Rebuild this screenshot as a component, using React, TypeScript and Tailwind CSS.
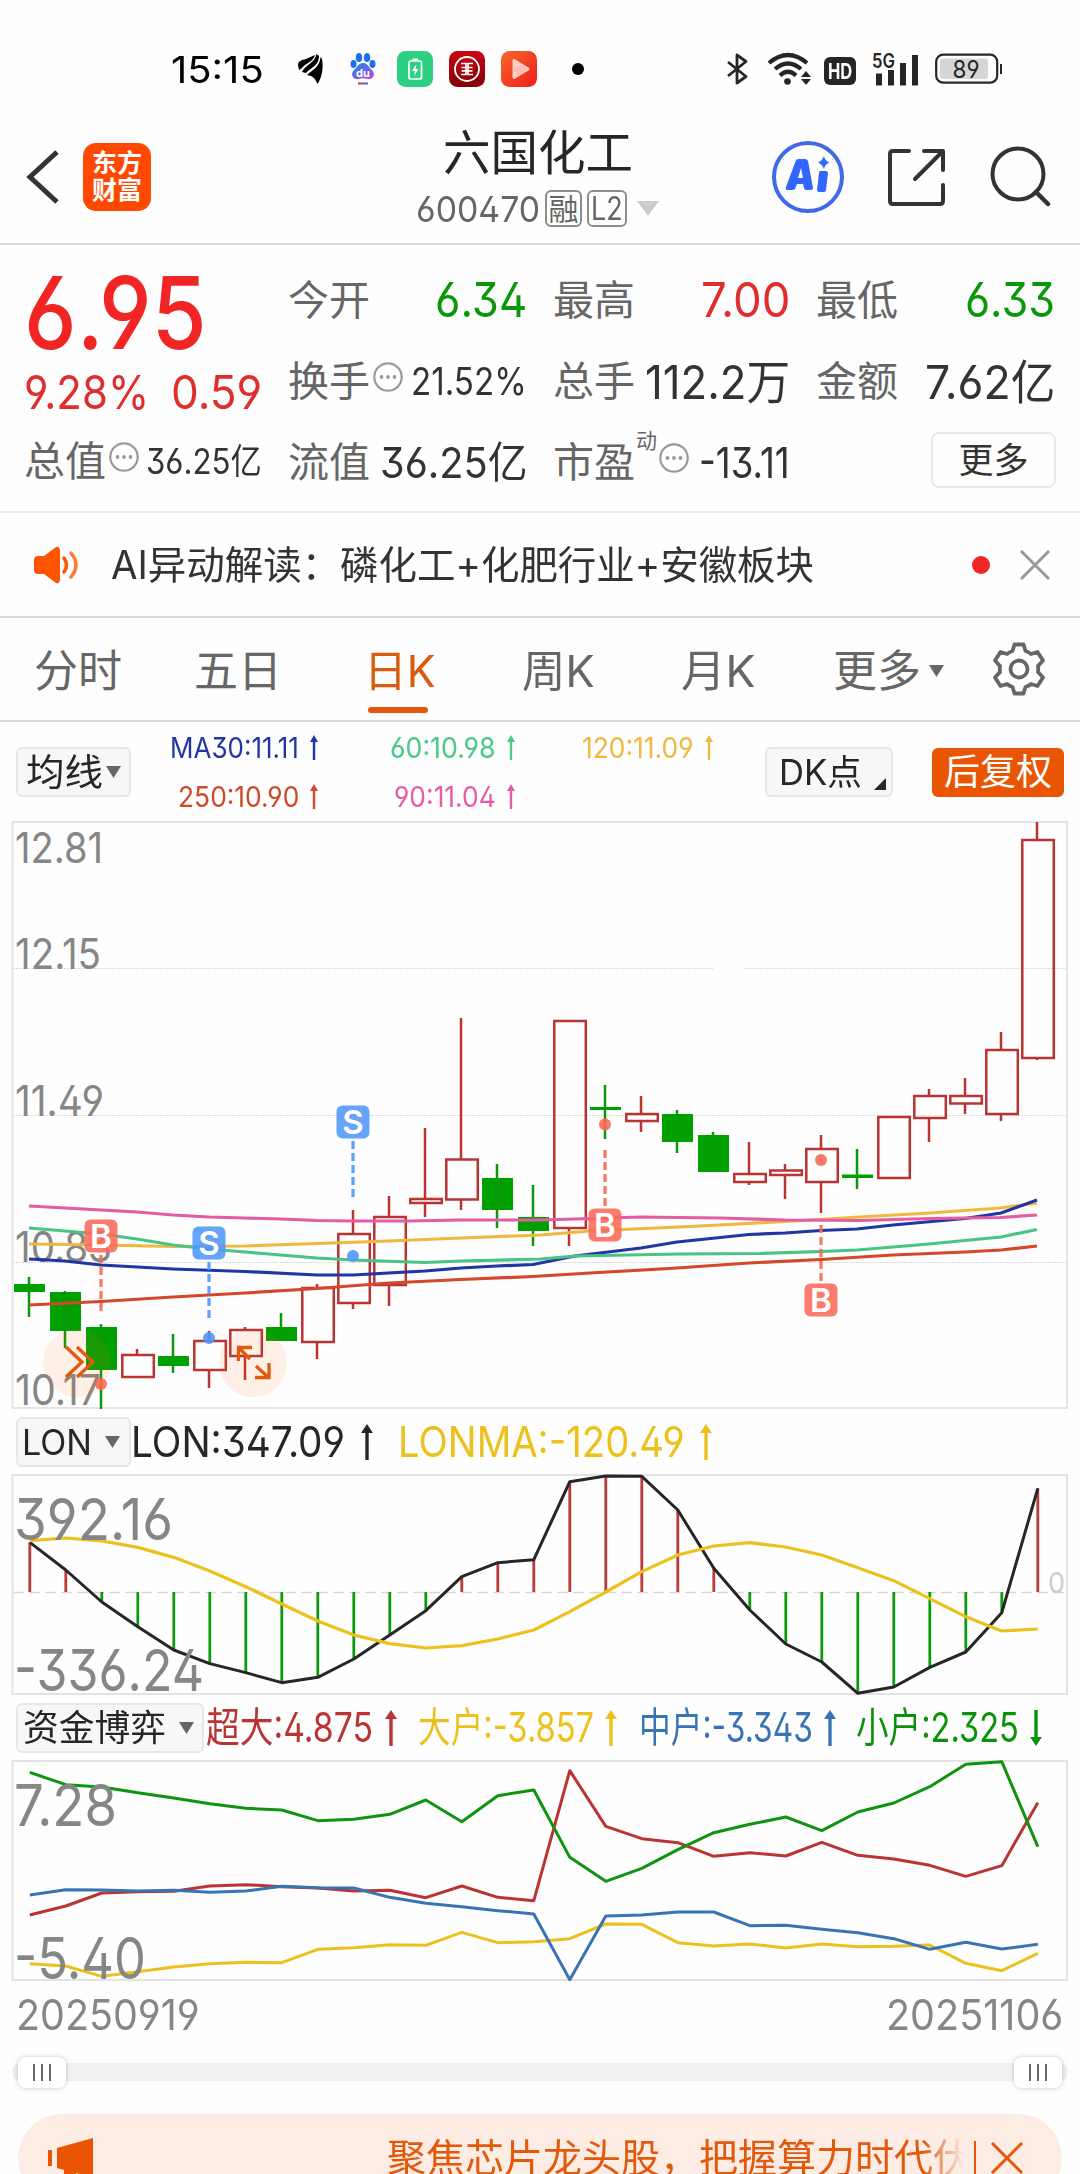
import { useLayoutEffect, useRef, useState, type ReactNode } from "react";

const RED = "#b93433";
const BLUE = "#3a73b4";
const GOLD = "#ecc11d";

/** Single line of text stretched horizontally to an exact width. */
function Fit({ w, className = "", children }: { w: number; className?: string; children: ReactNode }) {
  const ref = useRef<HTMLSpanElement>(null);
  const [scale, setScale] = useState(1);
  useLayoutEffect(() => {
    if (ref.current && ref.current.offsetWidth) setScale(w / ref.current.offsetWidth);
  }, [w]);
  return (
    <span className={`flex shrink-0 items-center ${className}`} style={{ width: w }}>
      <span ref={ref} className="shrink-0 origin-left whitespace-nowrap leading-none" style={{ transform: `scaleX(${scale})` }}>
        {children}
      </span>
    </span>
  );
}

function Arrow({ down = false, h = 36, className = "" }: { down?: boolean; h?: number; className?: string }) {
  return (
    <svg width="14" height={h} viewBox={`0 0 14 ${h}`} className={`shrink-0 ${down ? "rotate-180" : ""} ${className}`}>
      <path d={`M7 5V${h}`} stroke="currentColor" strokeWidth={h > 30 ? 3.4 : 2.4} />
      <path d={h > 30 ? "M7 0L13 9H1Z" : "M7 0L11 7H3Z"} fill="currentColor" />
    </svg>
  );
}

function Caret({ className = "" }: { className?: string }) {
  return (
    <svg width="15" height="12" viewBox="0 0 15 12" className={`shrink-0 ${className}`}>
      <path d="M0 0H15L7.5 12Z" fill="currentColor" />
    </svg>
  );
}

function Dots() {
  return (
    <svg width="30" height="30" viewBox="0 0 30 30" className="mb-2 shrink-0 text-[#999]">
      <circle cx="15" cy="15" r="13.7" fill="none" stroke="currentColor" strokeWidth="2.2" />
      <circle cx="8.5" cy="15" r="1.9" fill="currentColor" />
      <circle cx="15" cy="15" r="1.9" fill="currentColor" />
      <circle cx="21.5" cy="15" r="1.9" fill="currentColor" />
    </svg>
  );
}

function StatusBar() {
  return (
    <div className="flex h-[100px] shrink-0 items-center pl-[171px] pt-[38px] text-black">
      <Fit w={93} className="text-[37px]">15:15</Fit>
      <svg width="28" height="32" viewBox="0 0 28 32" className="ml-[33px]">
        <path d="M1 12C1 8 5 7 9 6L18 2C17 8 9 10 5 15L2 17Z" />
        <path d="M5 19C8 12 18 10 19.500 1L22 3C22 13 13 15 9 20Z" />
        <path d="M10 22C15 17 23 14 23.500 4L25 6C27 17 24 26 20.500 31C18 25 16 23 10 22Z" />
      </svg>
      <svg width="26" height="34" viewBox="0 0 26 34" className="ml-[25px]">
        <defs>
          <linearGradient id="paw" x1="0" y1="0" x2="1" y2="1">
            <stop offset="0" stopColor="#1687f8" />
            <stop offset="1" stopColor="#b04ad8" />
          </linearGradient>
        </defs>
        <g fill="#1d6ff0">
          <ellipse cx="3.5" cy="12" rx="3" ry="4" />
          <ellipse cx="9" cy="5.5" rx="3.2" ry="4.5" />
          <ellipse cx="17" cy="5.5" rx="3.2" ry="4.5" />
          <ellipse cx="22.5" cy="12" rx="3" ry="4" />
        </g>
        <path d="M13 11C18 11 19 16 22 18C26 22 23 28 18 27C15 26 11 26 8 27C3 28 0 22 4 18C7 16 8 11 13 11Z" fill="url(#paw)" />
        <text x="13" y="25" fontSize="11" fontWeight="700" fill="#fff" textAnchor="middle">du</text>
        <path d="M8 31.5H13" stroke="#d63a3a" strokeWidth="2" />
        <path d="M13 31.5H18" stroke="#3a6bd6" strokeWidth="2" />
      </svg>
      <svg width="36" height="36" viewBox="0 0 36 36" className="ml-[21px]">
        <rect width="36" height="36" rx="8.5" fill="#2dcf81" />
        <rect x="12" y="10" width="12.500" height="18" rx="2" fill="none" stroke="#fff" strokeWidth="1.700" />
        <path d="M15.500 8.500H21" stroke="#fff" strokeWidth="2" />
        <path d="M19.500 13L15 20H18L17 25L21.500 18H18.500Z" fill="#fff" />
      </svg>
      <svg width="36" height="36" viewBox="0 0 36 36" className="ml-4">
        <defs>
          <linearGradient id="bank" x1="0" y1="0" x2="0" y2="1">
            <stop offset="0" stopColor="#cc0412" />
            <stop offset="1" stopColor="#820008" />
          </linearGradient>
        </defs>
        <rect width="36" height="36" rx="8.500" fill="url(#bank)" />
        <circle cx="18" cy="18" r="12" fill="none" stroke="#fff" strokeWidth="1.800" />
        <path d="M12 12.500H17V23.500H12M24 12.500H19V23.500H24M12.500 16.500H23.500M12.500 19.800H23.500" fill="none" stroke="#fff" strokeWidth="1.700" />
      </svg>
      <svg width="36" height="36" viewBox="0 0 36 36" className="ml-4">
        <defs>
          <linearGradient id="play" x1="0" y1="0" x2="1" y2="1">
            <stop offset="0" stopColor="#f7692c" />
            <stop offset="1" stopColor="#ee1c1c" />
          </linearGradient>
        </defs>
        <rect width="36" height="36" rx="8.500" fill="url(#play)" />
        <path d="M13 9.500L27 18L13 26.500Z" fill="#ffd0c5" stroke="#ffd0c5" strokeWidth="3" strokeLinejoin="round" />
        <path d="M12 18L20 14L27 18L18 25Z" fill="#ffb5a5" opacity=".7" />
      </svg>
      <span className="ml-[35px] size-3 rounded-full bg-black" />
      <svg width="24" height="34" viewBox="0 0 24 34" className="ml-[142px]">
        <path d="M2 10L20 24.500L11 31V3L20 9.500L2 24" fill="none" stroke="#262626" strokeWidth="2.800" strokeLinejoin="round" />
      </svg>
      <svg width="46" height="34" viewBox="0 0 46 34" className="ml-[17px]">
        <g fill="none" stroke="#262626" strokeWidth="4.200">
          <path d="M2 11Q21 -5 40 11" />
          <path d="M8 17Q21 6 34 17" />
          <path d="M13 23.500Q21 16 29 23.500" />
        </g>
        <circle cx="20.500" cy="29.500" r="3.300" fill="#262626" />
        <path d="M39 19L44 25H34ZM39 33L44 27H34Z" fill="#262626" />
      </svg>
      <span className="ml-[11px] mt-1 flex h-7 w-8 items-center justify-center rounded-md bg-[#262626] text-white">
        <Fit w={24} className="text-[22px] font-bold">HD</Fit>
      </span>
      <svg width="48" height="36" viewBox="0 -2 48 36" className="ml-4 overflow-visible text-[#262626]">
        <text x="0" y="14.500" fontSize="20" fontWeight="600" textLength="23" lengthAdjust="spacingAndGlyphs" fill="currentColor">5G</text>
        <path d="M7 20.500V32.500M19 17V32.500M31 10V32.500M43 2V32.500" stroke="currentColor" strokeWidth="6" />
      </svg>
      <svg width="68" height="32" viewBox="0 0 68 32" className="ml-[15px]">
        <rect x="1.200" y="1.700" width="61" height="28" rx="7" fill="none" stroke="#262626" strokeWidth="2.200" />
        <rect x="5" y="5.500" width="48" height="20.500" rx="3" fill="#d6d6d6" />
        <path d="M66 11V21" stroke="#262626" strokeWidth="2" />
        <text x="17.500" y="24.500" fontSize="24" textLength="27" lengthAdjust="spacingAndGlyphs" fill="#262626">89</text>
      </svg>
    </div>
  );
}

function Header() {
  return (
    <div className="flex h-[145px] shrink-0 items-center border-b-2 border-[#dadada] pl-[26px] pt-[11px] text-[#333]">
      <svg width="34" height="54" viewBox="0 0 34 54">
        <path d="M31 2L4 27L31 52" fill="none" stroke="#333" strokeWidth="5" />
      </svg>
      <div className="ml-[23px] flex size-[68px] flex-col items-center justify-center rounded-[13px] bg-[#ff4902] text-[25px] font-bold leading-[27px] text-white">
        <span>东方</span>
        <span>财富</span>
      </div>
      <div className="ml-[265px] flex w-[243px] flex-col items-center">
        <Fit w={190} className="mb-[13px] h-[50px] text-[48px] text-[#262626]">六国化工</Fit>
        <div className="flex h-9 items-center text-[#666]">
          <Fit w={124} className="text-[36px]">600470</Fit>
          <span className="ml-[5px] flex h-[37px] w-[37px] items-center justify-center rounded-md border-2 border-[#8c8c8c] text-[30px] leading-none">融</span>
          <span className="ml-[5px] flex h-[37px] w-10 items-center justify-center rounded-md border-2 border-[#8c8c8c]">
            <Fit w={32} className="text-[32px]">L2</Fit>
          </span>
          <svg width="22" height="15" viewBox="0 0 22 15" className="ml-[10px]">
            <path d="M0 0H22L11 15Z" fill="#ccc" />
          </svg>
        </div>
      </div>
      <svg width="74" height="74" viewBox="0 0 74 74" className="ml-[112px]">
        <circle cx="37" cy="37" r="34" fill="none" stroke="#4169ea" strokeWidth="4" />
        <path
          fillRule="evenodd"
          d="M25 20Q26 19 28 19H34Q36 19 37 21L42 48Q42 50 40 50H35Q34 50 33 48L32 44H26L24 49Q23 50 21 50H16Q14 50 15 47ZM30 28L27 38H32Z"
          fill="#3366ff"
        />
        <path d="M49 31H55Q57 31 57 33L55 50Q55 52 53 52H48Q46 52 46 50L48 33Q48 31 49 31Z" fill="#3366ff" />
        <path d="M53 16Q54 21 58.500 22.500Q54 24 53 29Q51 24 47 22.500Q51 21 53 16Z" fill="#3366ff" />
      </svg>
      <svg width="60" height="60" viewBox="0 0 60 60" className="ml-[41px]">
        <g fill="none" stroke="#333" strokeWidth="4" strokeLinecap="round" strokeLinejoin="round">
          <path d="M23 4H7Q4 4 4 7V54Q4 57 7 57H54Q57 57 57 54V38" />
          <path d="M38 4H57V23" />
          <path d="M56 5L29 32" />
        </g>
      </svg>
      <svg width="62" height="62" viewBox="0 0 62 62" className="ml-[43px]">
        <circle cx="29" cy="28" r="25.500" fill="none" stroke="#333" strokeWidth="4" />
        <path d="M47 46L59 58" stroke="#333" strokeWidth="4.500" strokeLinecap="round" />
      </svg>
    </div>
  );
}

function Stat({ label, children }: { label: string; children?: ReactNode }) {
  return (
    <div className="flex h-[60px] items-center">
      <Fit w={82} className="text-[41px] text-[#666]">{label}</Fit>
      {children}
    </div>
  );
}

function Quote() {
  return (
    <div className="flex h-[268px] shrink-0 gap-x-[26px] border-b-2 border-[#ececec] pl-[24px] text-[#333]">
      <div className="flex w-[238px] flex-col pt-[9px]">
        <Fit w={183} className="h-[116px] text-[101px] font-medium text-[#f22525]">6.95</Fit>
        <div className="flex h-[42px] justify-between text-[#de2e2e]">
          <Fit w={125} className="text-[47px]">9.28%</Fit>
          <Fit w={91} className="text-[47px]">0.59</Fit>
        </div>
        <div className="mt-[19px]">
          <Stat label="总值">
            <span className="ml-[3px]"><Dots /></span>
            <Fit w={116} className="ml-auto text-[35px]">36.25亿</Fit>
          </Stat>
        </div>
      </div>
      <div className="flex w-[239px] flex-col gap-[21px] pt-[25px]">
        <Stat label="今开"><Fit w={92} className="ml-auto text-[48px] text-[#0a980a]">6.34</Fit></Stat>
        <Stat label="换手">
          <span className="ml-[3px]"><Dots /></span>
          <Fit w={116} className="ml-auto text-[38px]">21.52%</Fit>
        </Stat>
        <Stat label="流值"><Fit w={147} className="ml-auto text-[43px]">36.25亿</Fit></Stat>
      </div>
      <div className="flex w-[237px] flex-col gap-[21px] pt-[25px]">
        <Stat label="最高"><Fit w={89} className="ml-auto text-[48px] text-[#de2e2e]">7.00</Fit></Stat>
        <Stat label="总手"><Fit w={145} className="ml-auto text-[47px]">112.2万</Fit></Stat>
        <Stat label="市盈">
          <span className="mb-11 ml-px w-[23px] text-[21px] leading-none text-[#666]">动</span>
          <Dots />
          <Fit w={91} className="ml-auto text-[43px]">-13.11</Fit>
        </Stat>
      </div>
      <div className="flex w-[239px] flex-col gap-[21px] pt-[25px]">
        <Stat label="最低"><Fit w={90} className="ml-auto text-[48px] text-[#0a980a]">6.33</Fit></Stat>
        <Stat label="金额"><Fit w={130} className="ml-auto text-[47px]">7.62亿</Fit></Stat>
        <div className="-mr-px flex h-14 w-[125px] items-center justify-center self-end rounded-lg border-2 border-[#e8e8e8] text-[35px]">更多</div>
      </div>
    </div>
  );
}

function News() {
  return (
    <div className="flex h-[105px] shrink-0 items-center border-b-2 border-[#dadada] pl-[33px] text-[#333]">
      <svg width="46" height="38" viewBox="0 0 46 38">
        <path d="M5 10H11L23 1Q26 0 27 4V34Q26 38 23 37L11 28H5Q1 28 1 24V14Q1 10 5 10Z" fill="#ff5500" />
        <path d="M31 12Q36 19 31 26" fill="none" stroke="#ff5500" strokeWidth="3.500" strokeLinecap="round" />
        <path d="M38 7Q48 19 38 31" fill="none" stroke="#ff7b38" strokeWidth="3.500" strokeLinecap="round" />
      </svg>
      <Fit w={703} className="ml-[32px] text-[39px]">AI异动解读：磷化工+化肥行业+安徽板块</Fit>
      <span className="ml-[158px] size-[18px] rounded-full bg-[#f22525]" />
      <svg width="30" height="30" viewBox="0 0 30 30" className="ml-[30px]">
        <path d="M1 1L29 29M29 1L1 29" stroke="#999" strokeWidth="3" />
      </svg>
    </div>
  );
}

function Tabs() {
  return (
    <div className="flex h-[104px] shrink-0 items-center border-b-2 border-[#dadada] pl-[34px] pt-1 text-[44px] text-[#666]">
      <Fit w={88}>分时</Fit>
      <Fit w={88} className="ml-[72px]">五日</Fit>
      <div className="relative ml-[82px] text-[#dc5a0e]">
        <Fit w={72}>日K</Fit>
        <span className="absolute left-1 top-[58px] h-[6px] w-[60px] rounded-full bg-[#e2590c]" />
      </div>
      <Fit w={73} className="ml-[86px]">周K</Fit>
      <Fit w={75} className="ml-[86px]">月K</Fit>
      <Fit w={88} className="ml-[77px]">更多</Fit>
      <Caret className="ml-[8px]" />
      <svg width="54" height="54" viewBox="0 0 54 54" className="mb-1 ml-[48px]">
        <path
          d="M22.500 2.500H31.500L33.500 9Q36.500 10 39 12L45.500 10L51 18.500L46 24Q46.500 27 46 30L51 35.500L45.500 44L39 42Q36.500 44 33.500 45L31.500 51.500H22.500L20.500 45Q17.500 44 15 42L8.500 44L3 35.500L8 30Q7.500 27 8 24L3 18.500L8.500 10L15 12Q17.500 10 20.500 9Z"
          fill="none"
          stroke="#666"
          strokeWidth="3.800"
          strokeLinejoin="round"
        />
        <circle cx="27" cy="27" r="8.500" fill="none" stroke="#666" strokeWidth="3.800" />
      </svg>
    </div>
  );
}

function MaLegend({ w, color, children }: { w: number; color: string; children: string }) {
  return (
    <div className={`flex h-7 items-center justify-end ${color}`}>
      <Fit w={w} className="text-[29px]">{children}</Fit>
      <Arrow h={25} className="ml-2" />
    </div>
  );
}

function MaBar() {
  return (
    <div className="flex h-[98px] shrink-0 items-center pl-4 pt-[2px] text-[#262626]">
      <div className="flex h-[50px] w-[115px] items-center rounded-md border-2 border-[#e6e7e9] bg-[#f6f7f9] pl-2">
        <Fit w={77} className="text-[37px]">均线</Fit>
        <Caret className="ml-[3px] text-[#666]" />
      </div>
      <div className="ml-[38px] grid w-[548px] grid-cols-[152px_197px_198px] gap-y-[21px]">
        <MaLegend w={129} color="text-[#2036a4]">MA30:11.11</MaLegend>
        <MaLegend w={106} color="text-[#48c986]">60:10.98</MaLegend>
        <MaLegend w={112} color="text-[#efb840]">120:11.09</MaLegend>
        <MaLegend w={121} color="text-[#cf4a2b]">250:10.90</MaLegend>
        <MaLegend w={102} color="text-[#e85ba6]">90:11.04</MaLegend>
      </div>
      <div className="ml-[48px] flex h-[50px] w-[128px] items-center rounded-md border-2 border-[#e6e7e9] bg-[#f6f7f9] pl-3">
        <Fit w={83} className="text-[35px]">DK点</Fit>
        <svg width="12" height="12" viewBox="0 0 12 12" className="ml-[12px] mt-6">
          <path d="M12 0V12H0Z" fill="#262626" />
        </svg>
      </div>
      <div className="ml-[39px] flex h-[49px] w-[132px] items-center justify-center rounded-md bg-[#ea5504] text-white">
        <Fit w={108} className="text-[36px]">后复权</Fit>
      </div>
    </div>
  );
}

const xAt = (i: number) => 29 + 36 * i;

// [up?, body top, body bottom, high, low] in chart pixels
const CANDLES: [number, number, number, number, number][] = [
  [0, 1284, 1292, 1277, 1317], [0, 1292, 1331, 1291, 1348], [0, 1327, 1370, 1324, 1409],
  [1, 1355, 1377, 1349, 1377], [0, 1356, 1366, 1334, 1373], [1, 1341, 1370, 1331, 1388],
  [1, 1330, 1356, 1327, 1380], [0, 1327, 1341, 1313, 1341], [1, 1288, 1342, 1284, 1359],
  [1, 1234, 1303, 1210, 1309], [1, 1217, 1285, 1196, 1306], [1, 1199, 1203, 1128, 1217],
  [1, 1159.5, 1199.500, 1018, 1210], [0, 1178, 1210, 1164, 1228], [0, 1217, 1231, 1185, 1246],
  [1, 1021, 1228, 1021, 1246], [0, 1107, 1110, 1085, 1139], [1, 1114, 1121, 1096, 1132],
  [0, 1114, 1142, 1110, 1153], [0, 1135, 1172, 1132, 1172], [1, 1174, 1182, 1142, 1185],
  [1, 1170.5, 1175, 1164, 1199], [1, 1149, 1182, 1135, 1213], [0, 1174.500, 1178, 1149, 1189],
  [1, 1117, 1178, 1117, 1178], [1, 1096, 1118, 1089, 1142], [1, 1096, 1103.500, 1078, 1114],
  [1, 1050, 1114, 1032, 1121], [1, 840, 1058, 822, 1060],
];

const AVERAGES: [string, string][] = [
  ["#efb840", "29,1244 101,1245 173,1246.500 245,1246 317,1243.500 389,1241 461,1238 541,1235 590,1231 700,1226 785,1221.500 860,1217 930,1213 1000,1208 1037,1203"],
  ["#2036a4", "29,1259 65,1261 101,1265 173,1269 245,1271.500 317,1275 353,1275 425,1271 461,1268 497,1266 533,1264.500 575,1256 641,1248 677,1242 749,1234.500 785,1233 821,1230.500 857,1229 893,1225 965,1218.500 1001,1213 1037,1200"],
  ["#4ac486", "29,1228 101,1234 137,1239 173,1245 209,1249 245,1252 281,1255 317,1258 353,1260 425,1262.500 461,1261 541,1259 575,1256 680,1254 760,1253.500 821,1251.500 857,1250 929,1244 1001,1237 1037,1229.500"],
  ["#e35ca4", "29,1206 65,1208 101,1210 137,1212 173,1215 209,1217 245,1218 281,1219 317,1220.500 353,1221 410,1221 460,1220 541,1220 575,1219 640,1217 720,1218 785,1220 860,1220.500 930,1218.500 1000,1217.500 1037,1215"],
  ["#d4482a", "29,1305 101,1301.500 173,1297 245,1293 317,1288.500 389,1283 461,1279.500 533,1276.500 590,1273 677,1268 749,1263 821,1259.500 893,1255 965,1252 1001,1250 1037,1246"],
];

// [letter, x, badge centre y, dash start, dash end, dot y]
const SIGNALS: [string, number, number, number, number, number][] = [
  ["B", 101, 1236, 1255, 1311, 1384],
  ["S", 209, 1243, 1262, 1318, 1338],
  ["S", 353, 1122, 1141, 1197, 1256],
  ["B", 605, 1225, 1150, 1206, 1124.500],
  ["B", 821, 1300, 1225, 1281, 1160],
];

const PRICE_LABELS: [string, number, number][] = [
  ["12.81", 863, 88], ["12.15", 969, 86], ["11.49", 1116, 89], ["10.83", 1262, 97], ["10.17", 1405, 86],
];

function AxisText({ x, y, w, size, children, fill = "#868686" }: { x: number; y: number; w: number; size: number; children: string; fill?: string }) {
  return (
    <text x={x} y={y} fontSize={size} textLength={w} lengthAdjust="spacingAndGlyphs" fill={fill}>
      {children}
    </text>
  );
}

function CandleChart() {
  return (
    <svg width="1080" height="590" viewBox="0 820 1080 590" className="shrink-0">
      <rect x="12.500" y="822" width="1054.500" height="586" fill="none" stroke="#e3e3e3" strokeWidth="2" />
      <path d="M13 968.500H713M745 968.500H1067M13 1115.500H1067M13 1262.500H1067" stroke="#d9d9d9" strokeWidth="1.200" strokeDasharray="2 1" />
      {PRICE_LABELS.map(([t, y, w]) => (
        <AxisText key={t} x={15} y={y} w={w} size={42}>{t}</AxisText>
      ))}
      {CANDLES.map(([up, top, bottom, hi, lo], i) =>
        up ? (
          <g key={i} stroke={RED} strokeWidth="2.500" fill="none">
            <rect x={xAt(i) - 14.700} y={top} width="31.500" height={bottom - top} />
            <path d={`M${xAt(i)} ${hi}V${top}M${xAt(i)} ${bottom}V${lo}`} />
          </g>
        ) : (
          <g key={i} fill="#00a000">
            <rect x={xAt(i) - 15} y={top} width="31" height={bottom - top} />
            <path d={`M${xAt(i)} ${hi}V${lo}`} stroke="#0a980a" strokeWidth="2.500" />
          </g>
        ),
      )}
      {AVERAGES.map(([c, pts]) => (
        <polyline key={c} points={pts} fill="none" stroke={c} strokeWidth="3.200" strokeLinejoin="round" />
      ))}
      {SIGNALS.map(([t, x, y, a, b, dot]) => {
        const c = t === "B" ? "#fb6a58" : "#4f97fb";
        return (
          <g key={`${t}${x}`}>
            <path d={`M${x} ${a}V${b}`} stroke={c} strokeWidth="3.300" strokeDasharray="8 4" opacity=".9" />
            <circle cx={x} cy={dot} r="6" fill={c} opacity=".9" />
            <rect x={x - 16.500} y={y - 16.500} width="33" height="33" rx="6" fill={c} opacity=".88" />
            <text x={x} y={y + 12} fontSize="33" fontWeight="600" textAnchor="middle" fill="#fff">{t}</text>
          </g>
        );
      })}
      <circle cx="77" cy="1363" r="34" fill="#ff6a1a" opacity=".1" />
      <circle cx="253" cy="1363" r="34" fill="#ff6a1a" opacity=".1" />
      <g fill="none" stroke="#e2590c" strokeWidth="3.300">
        <path d="M66 1347L82 1362L66 1377M77 1347L93 1362L77 1377" />
        <path d="M250 1359L239 1348M252 1347.500H238.500V1361M256 1366L268 1377M269 1363V1377.500H255" />
      </g>
    </svg>
  );
}

const LON = [247, 330, 426, 500, 570, 611, 638, 668, 652, 597, 525, 452, 350, 308, 299, 65, 48, 49, 150, 325, 450, 552, 606, 700, 681, 622, 576, 458, 85];
const LONMA = [242, 234, 243, 262, 292, 333, 380, 432, 483, 525, 551, 564, 557, 537, 510, 455, 396, 335, 285, 258, 248, 261, 285, 323, 362, 416, 470, 513, 507];
const line = (v: number[], base: number) => v.map((p, i) => `${xAt(i) + 0.8},${base + p / 3}`).join(" ");

function LonChart() {
  return (
    <svg width="1080" height="221" viewBox="0 1474 1080 221" className="shrink-0">
      <rect x="12.500" y="1475" width="1054.500" height="219" fill="none" stroke="#e3e3e3" strokeWidth="2" />
      <path d="M13 1592.500H1067" stroke="#d9d9d9" strokeWidth="1.500" strokeDasharray="11 5" />
      {LON.map((p, i) => (
        <path key={i} d={`M${xAt(i) + 0.8} 1592V${1460 + p / 3}`} stroke={p < 396 ? "#bb3a3a" : "#109a10"} strokeWidth="2.800" />
      ))}
      <polyline points={line(LON, 1460)} fill="none" stroke="#262626" strokeWidth="3" strokeLinejoin="round" />
      <polyline points={line(LONMA, 1460)} fill="none" stroke={GOLD} strokeWidth="3.200" strokeLinejoin="round" />
      <AxisText x={14} y={1540} w={159} size={58}>392.16</AxisText>
      <AxisText x={14} y={1691} w={190} size={58}>-336.24</AxisText>
      <AxisText x={1048} y={1593} w={17} size={29} fill="#ccc">0</AxisText>
    </svg>
  );
}

const FUNDS: [string, number[]][] = [
  [GOLD, [671, 678, 709, 695, 681, 671, 667, 668, 628, 623, 614, 616, 577, 608, 605, 596, 552, 553, 608, 618, 612, 624, 612, 620, 619, 615, 670, 692, 640]],
  [RED, [525, 498, 459, 455, 454, 438, 434, 440, 444, 453, 451, 473, 438, 472, 482, 92, 259, 296, 308, 349, 338, 348, 307, 346, 357, 376, 409, 377, 188]],
  [BLUE, [465, 449, 450, 453, 451, 457, 453, 439, 443, 444, 472, 490, 500, 512, 522, 719, 528, 525, 516, 516, 557, 556, 568, 578, 596, 628, 607, 627, 613]],
  ["#109410", [97, 134, 141, 158, 174, 191, 205, 210, 242, 238, 223, 180, 245, 167, 150, 352, 424, 385, 329, 278, 253, 231, 272, 216, 189, 140, 73, 65, 320]],
];

function FundChart() {
  return (
    <svg width="1080" height="221" viewBox="0 1760 1080 221" className="shrink-0">
      <rect x="12.500" y="1761" width="1054.500" height="219" fill="none" stroke="#e3e3e3" strokeWidth="2" />
      {FUNDS.map(([c, v]) => (
        <polyline key={c} points={line(v, 1740)} fill="none" stroke={c} strokeWidth="3" strokeLinejoin="round" />
      ))}
      <AxisText x={14} y={1826} w={103} size={58}>7.28</AxisText>
      <AxisText x={14} y={1979} w={132} size={58}>-5.40</AxisText>
    </svg>
  );
}

function Grip() {
  return (
    <span className="flex h-[31px] w-12 items-center justify-center gap-[6px] rounded-lg bg-white shadow-[0_0_5px_rgba(0,0,0,0.22)]">
      <i className="h-[17px] w-[2px] bg-[#666]" />
      <i className="h-[17px] w-[2px] bg-[#666]" />
      <i className="h-[17px] w-[2px] bg-[#666]" />
    </span>
  );
}

export default function App() {
  return (
    <div className="flex h-[2174px] w-[1080px] flex-col overflow-hidden bg-[#fefefe] font-['Inter','Noto_Sans_CJK_SC',sans-serif] [font-feature-settings:'ss01','cv09']">
      <StatusBar />
      <Header />
      <Quote />
      <News />
      <Tabs />
      <MaBar />
      <CandleChart />
      <div className="flex h-16 shrink-0 items-center pl-4 text-[#262626]">
        <div className="flex h-[50px] w-[115px] items-center rounded-md border-2 border-[#e6e7e9] bg-[#f6f7f9] pl-[4px]">
          <Fit w={70} className="text-[35px]">LON</Fit>
          <Caret className="ml-[13px] text-[#666]" />
        </div>
        <Fit w={214} className="text-[42px]">LON:347.09</Fit>
        <Arrow className="ml-[15px]" />
        <Fit w={287} className="ml-[24px] text-[42px] text-[#ecc11d]">LONMA:-120.49</Fit>
        <Arrow className="ml-[14px] text-[#ecc11d]" />
      </div>
      <LonChart />
      <div className="flex h-[65px] shrink-0 items-center pl-4 text-[#262626]">
        <div className="flex h-[50px] w-[188px] items-center rounded-md border-2 border-[#e6e7e9] bg-[#f6f7f9] pl-[5px]">
          <Fit w={143} className="text-[36px]">资金博弈</Fit>
          <Caret className="ml-[13px] text-[#666]" />
        </div>
        <Fit w={167} className="ml-[2px] text-[41px] text-[#b93433]">超大:4.875</Fit>
        <Arrow className="ml-[11px] text-[#b93433]" />
        <Fit w={176} className="ml-[20px] text-[41px] text-[#ecc11d]">大户:-3.857</Fit>
        <Arrow className="ml-[10px] text-[#ecc11d]" />
        <Fit w={174} className="ml-[21px] text-[41px] text-[#3a73b4]">中户:-3.343</Fit>
        <Arrow className="ml-[10px] text-[#3a73b4]" />
        <Fit w={163} className="ml-[19px] text-[41px] text-[#0a930a]">小户:2.325</Fit>
        <Arrow down className="ml-[10px] text-[#0a930a]" />
      </div>
      <FundChart />
      <div className="flex h-[67px] shrink-0 items-center justify-between pl-4 pr-[17px] text-[42px] text-[#868686]">
        <Fit w={184}>20250919</Fit>
        <Fit w={177}>20251106</Fit>
      </div>
      <div className="flex h-12 shrink-0 items-center px-3">
        <div className="flex h-[18px] w-full items-center justify-between rounded-full bg-[#f0f0f3] px-[6px]">
          <Grip />
          <Grip />
        </div>
      </div>
      <div className="mx-[18px] mt-[18px] flex h-[88px] shrink-0 items-center rounded-[44px] bg-[#fcece4] pl-[30px] text-[#e2590c]">
        <svg width="48" height="46" viewBox="0 0 48 46">
          <path d="M0 15H4V31H0ZM9 13L45 3V43L28 38L26 45H16V35L9 33Z" fill="#ea5504" />
        </svg>
        <div className="ml-[291px] w-[577px] overflow-hidden whitespace-nowrap text-[39px] leading-[56px] [mask-image:linear-gradient(to_right,black_93%,transparent_100%)]">
          聚焦芯片龙头股，把握算力时代伏笔
        </div>
        <span className="ml-[10px] h-[34px] w-[2px] bg-[#e2590c]" />
        <svg width="34" height="34" viewBox="0 0 34 34" className="ml-[14px]">
          <path d="M2 2L32 32M32 2L2 32" stroke="#e2590c" strokeWidth="3" />
        </svg>
      </div>
    </div>
  );
}
